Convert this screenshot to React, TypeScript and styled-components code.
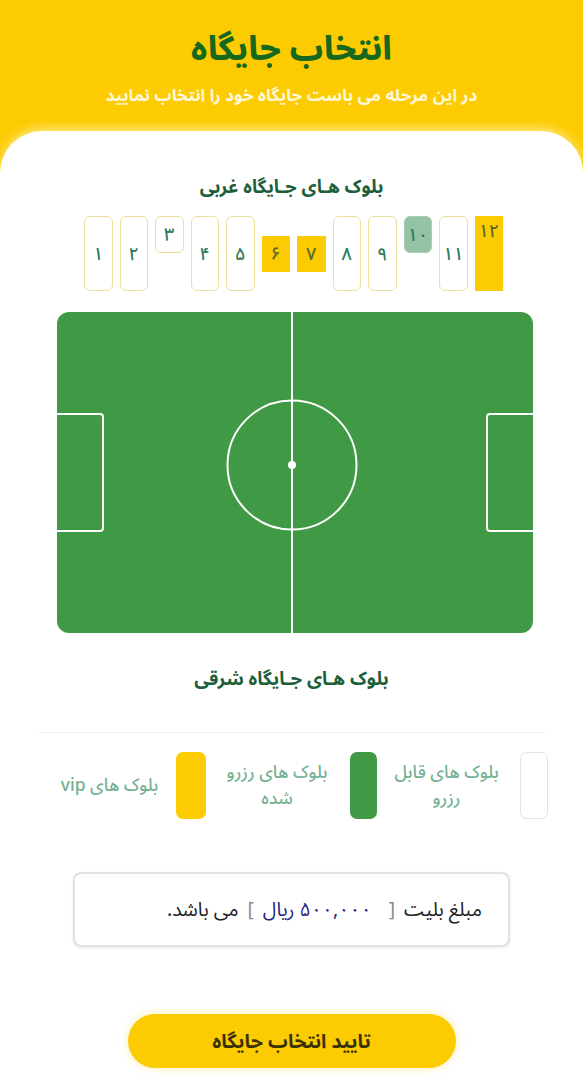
import React from "react";
import styled, { createGlobalStyle } from "styled-components";

const Global = createGlobalStyle`
  html, body { margin: 0; padding: 0; background: #ffffff; }
  body { font-family: "Noto Sans Arabic", "Vazirmatn", "DejaVu Sans", sans-serif; }
  * { box-sizing: border-box; }
`;

const YELLOW = "#fdcb02";
const FIELD = "#409a45";

const Page = styled.div`
  width: 583px;
  min-height: 1074px;
  background: ${YELLOW};
  display: flex;
  flex-direction: column;
  direction: rtl;
`;

const Header = styled.header`
  height: 131px;
  display: flex;
  flex-direction: column;
  align-items: center;
  padding-top: 30px;
`;

const Title = styled.h1`
  margin: 0;
  font-size: 33px;
  line-height: 40px;
  font-weight: 800;
  color: #16691c;
`;

const Subtitle = styled.p`
  margin: 15px 0 0;
  font-size: 17px;
  line-height: 22px;
  font-weight: 700;
  color: #fff8d8;
`;

const Card = styled.main`
  flex: 1;
  background: #ffffff;
  border-radius: 42px 42px 0 0;
  box-shadow: 0 -4px 10px rgba(255, 240, 150, 0.7);
  display: flex;
  flex-direction: column;
  align-items: center;
  padding-top: 44px;
`;

const SectionTitle = styled.h2<{ $mt?: number }>`
  margin: ${(p) => p.$mt ?? 0}px 0 0;
  font-size: 18.5px;
  line-height: 26px;
  font-weight: 700;
  color: #1d5e3b;
`;

const BlockRow = styled.div`
  direction: ltr;
  margin-top: 15px;
  height: 75px;
  display: flex;
  gap: 7px;
  align-items: flex-start;
  padding-left: 4px;
`;

type Kind = "free" | "reserved" | "vip";
type Size = "tall" | "short" | "mid";

const Block = styled.div<{ $kind: Kind; $size: Size; $top?: boolean }>`
  width: 28.5px;
  height: ${(p) => (p.$size === "tall" ? 75 : p.$size === "mid" ? 36 : 37)}px;
  align-self: ${(p) => (p.$size === "mid" ? "center" : "flex-start")};
  border-radius: ${(p) => (p.$kind === "vip" ? "0" : "6px")};
  border: 1px solid
    ${(p) => (p.$kind === "free" ? "#ecdf9c" : p.$kind === "reserved" ? "#a9cdb2" : YELLOW)};
  background: ${(p) => (p.$kind === "free" ? "#ffffff" : p.$kind === "reserved" ? "#93c2a5" : YELLOW)};
  display: flex;
  justify-content: center;
  align-items: ${(p) => (p.$top ? "flex-start" : "center")};
  padding-top: ${(p) => (p.$top ? "3px" : "0")};
  font-size: 18px;
  font-weight: 500;
  line-height: 22px;
  color: ${(p) => (p.$kind === "vip" ? "#5b6a2a" : "#2b7a5a")};
`;

const Pitch = styled.svg`
  display: block;
  margin-top: 21px;
  margin-left: 6px;
`;

const Divider = styled.hr`
  width: 508px;
  border: none;
  border-top: 1px solid #efefef;
  margin: 39px 0 0;
`;

const Legend = styled.div`
  width: 583px;
  display: grid;
  grid-template-columns: repeat(3, 157px);
  column-gap: 14px;
  padding-right: 35px;
  margin-top: 19px;
`;

const LegendItem = styled.div<{ $gap: number }>`
  display: flex;
  align-items: center;
  gap: ${(p) => p.$gap}px;
`;

const Swatch = styled.div<{ $kind: Kind }>`
  flex: 0 0 ${(p) => (p.$kind === "vip" ? 30 : p.$kind === "reserved" ? 27 : 28)}px;
  height: 67px;
  border-radius: 7px;
  background: ${(p) => (p.$kind === "free" ? "#ffffff" : p.$kind === "reserved" ? FIELD : YELLOW)};
  border: 1px solid ${(p) => (p.$kind === "free" ? "#e3e3e3" : "transparent")};
`;

const LegendLabel = styled.div`
  flex: 1;
  text-align: center;
  font-size: 17.5px;
  line-height: 26px;
  font-weight: 500;
  color: #74b192;
  white-space: pre-line;
`;

const PriceBox = styled.div`
  width: 437px;
  height: 75px;
  margin-top: 53px;
  border: 2px solid #e1e1e1;
  border-radius: 8px;
  box-shadow: 0 1px 3px rgba(0, 0, 0, 0.08);
  display: flex;
  align-items: center;
  padding-right: 26px;
  font-size: 19.5px;
  color: #222222;
`;

const Bracket = styled.span`
  color: #8a8a8a;
  margin: 0 9px;
`;

const Amount = styled.span`
  color: #25257d;
  margin: 0 8px 0 0;
`;

const ConfirmButton = styled.button`
  width: 328px;
  height: 54px;
  margin-top: 67px;
  border: none;
  border-radius: 27px;
  background: ${YELLOW};
  box-shadow: 0 0 8px rgba(250, 220, 80, 0.5);
  font-family: inherit;
  font-size: 19.5px;
  font-weight: 700;
  color: #3a3205;
  cursor: pointer;
`;

const blocks: { n: string; kind: Kind; size: Size; top?: boolean }[] = [
  { n: "۱", kind: "free", size: "tall" },
  { n: "۲", kind: "free", size: "tall" },
  { n: "۳", kind: "free", size: "short" },
  { n: "۴", kind: "free", size: "tall" },
  { n: "۵", kind: "free", size: "tall" },
  { n: "۶", kind: "vip", size: "mid" },
  { n: "۷", kind: "vip", size: "mid" },
  { n: "۸", kind: "free", size: "tall" },
  { n: "۹", kind: "free", size: "tall" },
  { n: "۱۰", kind: "reserved", size: "short" },
  { n: "۱۱", kind: "free", size: "tall" },
  { n: "۱۲", kind: "vip", size: "tall", top: true },
];

const FieldDrawing = () => (
  <Pitch width="476" height="321" viewBox="0 0 476 321">
    <rect x="0" y="0" width="476" height="321" rx="12" fill={FIELD} />
    <line x1="235" y1="0" x2="235" y2="321" stroke="#ffffff" strokeWidth="2" />
    <circle cx="235" cy="153" r="64.5" fill="none" stroke="#ffffff" strokeWidth="2" />
    <circle cx="235" cy="153" r="4" fill="#ffffff" />
    <path d="M0 102 H43 a3 3 0 0 1 3 3 V216 a3 3 0 0 1 -3 3 H0" fill="none" stroke="#ffffff" strokeWidth="2" />
    <path d="M476 102 H433 a3 3 0 0 0 -3 3 V216 a3 3 0 0 0 3 3 H476" fill="none" stroke="#ffffff" strokeWidth="2" />
  </Pitch>
);

export default function App() {
  return (
    <>
      <Global />
      <Page>
        <Header>
          <Title>انتخاب جایگاه</Title>
          <Subtitle>در این مرحله می باست جایگاه خود را انتخاب نمایید</Subtitle>
        </Header>
        <Card>
          <SectionTitle>بلوک هـای جـایگاه غربی</SectionTitle>
          <BlockRow>
            {blocks.map((b) => (
              <Block key={b.n} $kind={b.kind} $size={b.size} $top={b.top}>
                {b.n}
              </Block>
            ))}
          </BlockRow>
          <FieldDrawing />
          <SectionTitle $mt={34}>بلوک هـای جـایگاه شرقی</SectionTitle>
          <Divider />
          <Legend>
            <LegendItem $gap={18}>
              <Swatch $kind="free" />
              <LegendLabel>{"بلوک های قابل\nرزرو"}</LegendLabel>
            </LegendItem>
            <LegendItem $gap={16}>
              <Swatch $kind="reserved" />
              <LegendLabel>{"بلوک های رزرو\nشده"}</LegendLabel>
            </LegendItem>
            <LegendItem $gap={6}>
              <Swatch $kind="vip" />
              <LegendLabel>بلوک های vip</LegendLabel>
            </LegendItem>
          </Legend>
          <PriceBox>
            مبلغ بلیت
            <Bracket>[</Bracket>
            <Amount>۵۰۰,۰۰۰ ریال</Amount>
            <Bracket>]</Bracket>
            می باشد.
          </PriceBox>
          <ConfirmButton>تایید انتخاب جایگاه</ConfirmButton>
        </Card>
      </Page>
    </>
  );
}
